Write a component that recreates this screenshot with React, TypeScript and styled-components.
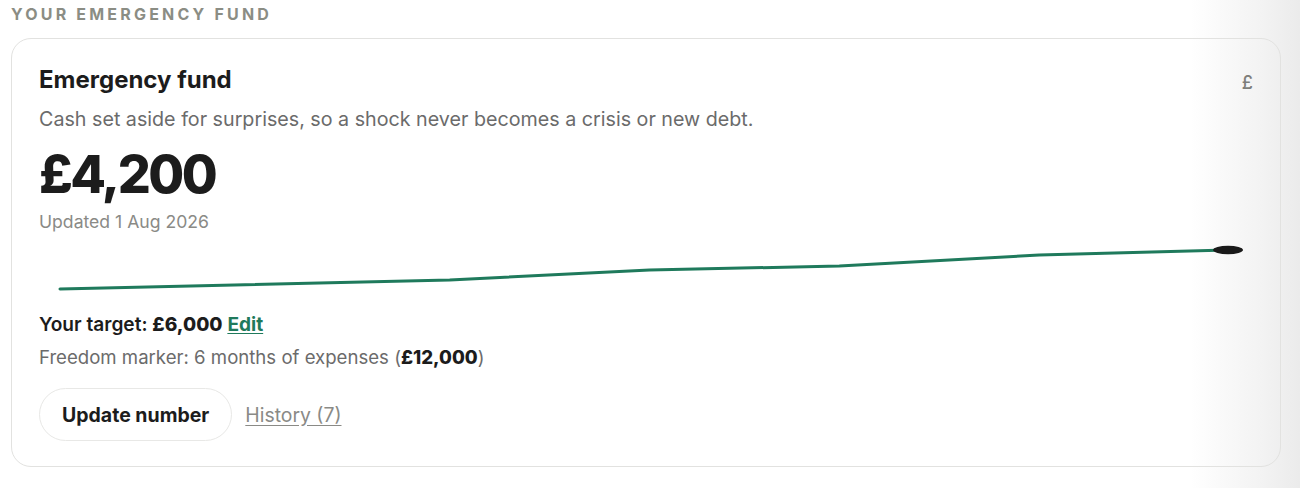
import * as React from 'react';
import styled, { createGlobalStyle } from 'styled-components';

const green = '#1f7a5c';
const ink = '#1c1c1c';
const muted = '#6b6b6b';
const soft = '#8a8a86';

const GlobalStyle = createGlobalStyle`
  html, body {
    margin: 0;
    padding: 0;
    background: #ffffff;
    font-family: Inter, "Noto Sans", "Liberation Sans", sans-serif;
    color: ${ink};
  }
  * { box-sizing: border-box; }
`;

const Page = styled.div`
  width: 1300px;
  height: 488px;
  overflow: hidden;
  padding: 2px 19px 0 11px;
  background: linear-gradient(
    to right,
    #ffffff 0,
    #ffffff 1190px,
    #f3f3f3 1260px,
    #ebebeb 1300px
  );
`;

const SectionLabel = styled.h2`
  margin: 0 0 12px;
  font-size: 16px;
  line-height: 24px;
  font-weight: 700;
  letter-spacing: 0.2em;
  text-transform: uppercase;
  color: #8b8d84;
`;

const Card = styled.section`
  position: relative;
  border: 1px solid #e2e2e0;
  border-radius: 20px;
  padding: 27px 28px 25px 27px;
  display: flex;
  flex-direction: column;
`;

const CurrencyTag = styled.span`
  position: absolute;
  top: 33px;
  right: 27px;
  font-size: 18px;
  font-weight: 500;
  color: #7e7e7b;
`;

const Title = styled.h3`
  margin: 0;
  font-size: 24px;
  line-height: 28px;
  font-weight: 700;
  color: ${ink};
`;

const Description = styled.p`
  margin: 12px 0 0;
  font-size: 19.7px;
  line-height: 26px;
  color: ${muted};
`;

const Amount = styled.div`
  margin-top: 14px;
  font-size: 52px;
  line-height: 57px;
  font-weight: 800;
  letter-spacing: -0.048em;
  color: ${ink};
`;

const Updated = styled.div`
  margin-top: 8px;
  font-size: 17.6px;
  line-height: 22px;
  color: ${soft};
`;

const Chart = styled.svg`
  display: block;
  width: 100%;
  height: 60px;
  margin-top: 4px;
`;

const TargetLine = styled.div`
  margin-top: 14px;
  font-size: 19.1px;
  line-height: 26px;
  font-weight: 600;
  color: ${ink};
`;

const Strong = styled.strong`
  font-weight: 800;
  color: ${ink};
`;

const EditLink = styled.a`
  color: ${green};
  font-weight: 700;
  text-decoration: underline;
  text-underline-offset: 2px;
  cursor: pointer;
`;

const MarkerLine = styled.div`
  margin-top: 7px;
  font-size: 18.6px;
  line-height: 26px;
  color: ${muted};
`;

const Actions = styled.div`
  margin-top: 18px;
  display: flex;
  align-items: center;
  gap: 13px;
`;

const PillButton = styled.button`
  height: 53px;
  padding: 0 22px;
  border: 1px solid #e8e8e6;
  border-radius: 999px;
  background: #ffffff;
  font-family: inherit;
  font-size: 19.5px;
  font-weight: 700;
  color: ${ink};
  cursor: pointer;
`;

const HistoryLink = styled.a`
  font-size: 19.4px;
  color: ${soft};
  text-decoration: underline;
  text-underline-offset: 3px;
  cursor: pointer;
`;

const points: [number, number][] = [
  [21, 52],
  [411, 43],
  [611, 33],
  [801, 29],
  [1001, 18],
  [1189, 13],
];

const TrendChart = () => {
  const last = points[points.length - 1];
  return (
    <Chart viewBox="0 0 1214 60" preserveAspectRatio="none">
      <polyline
        points={points.map(([x, y]) => `${x},${y}`).join(' ')}
        fill="none"
        stroke={green}
        strokeWidth={3}
        strokeLinejoin="round"
        strokeLinecap="round"
      />
      <ellipse cx={last[0] + 1} cy={last[1]} rx={15} ry={4.2} fill="#1a1a1a" />
    </Chart>
  );
};

export default function App() {
  return (
    <>
      <GlobalStyle />
      <Page>
        <SectionLabel>Your emergency fund</SectionLabel>
        <Card>
          <CurrencyTag>£</CurrencyTag>
          <Title>Emergency fund</Title>
          <Description>
            Cash set aside for surprises, so a shock never becomes a crisis or new debt.
          </Description>
          <Amount>£4,200</Amount>
          <Updated>Updated 1 Aug 2026</Updated>
          <TrendChart />
          <TargetLine>
            Your target: <Strong>£6,000</Strong> <EditLink>Edit</EditLink>
          </TargetLine>
          <MarkerLine>
            Freedom marker: 6 months of expenses (<Strong>£12,000</Strong>)
          </MarkerLine>
          <Actions>
            <PillButton>Update number</PillButton>
            <HistoryLink>History (7)</HistoryLink>
          </Actions>
        </Card>
      </Page>
    </>
  );
}
